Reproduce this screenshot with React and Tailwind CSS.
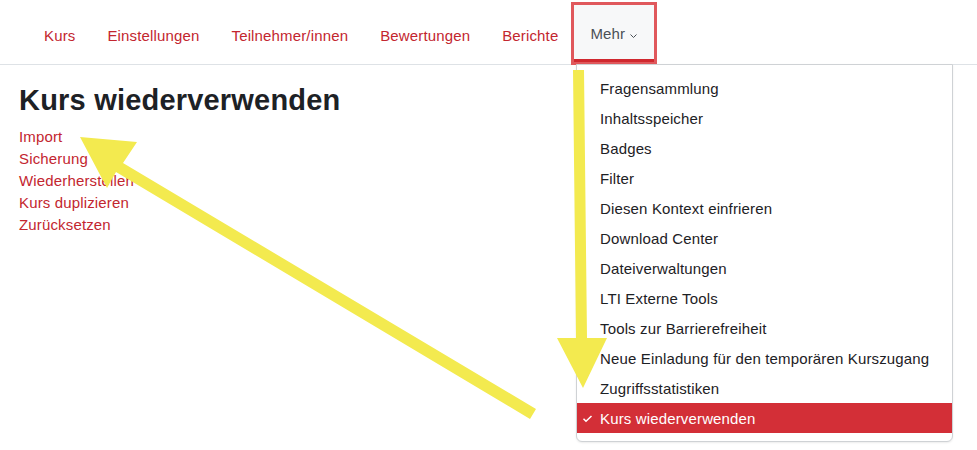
import React from "react";

const navItems = ["Kurs", "Einstellungen", "Teilnehmer/innen", "Bewertungen", "Berichte"];
const links = ["Import", "Sicherung", "Wiederherstellen", "Kurs duplizieren", "Zurücksetzen"];
const menu = [
  "Fragensammlung",
  "Inhaltsspeicher",
  "Badges",
  "Filter",
  "Diesen Kontext einfrieren",
  "Download Center",
  "Dateiverwaltungen",
  "LTI Externe Tools",
  "Tools zur Barrierefreiheit",
  "Neue Einladung für den temporären Kurszugang",
  "Zugriffsstatistiken",
];

export default function App() {
  return (
    <div
      className="relative w-[977px] h-[450px] bg-white overflow-hidden text-[15px] tracking-[0.15px]"
      style={{ fontFamily: '"Liberation Sans", Arial, sans-serif' }}
    >
      <nav className="h-[65px] border-b border-[#dee2e6] flex items-stretch pl-[28px]">
        {navItems.map((t) => (
          <div key={t} className="flex items-center px-4 pt-[8px] text-[#c3262f]">
            {t}
          </div>
        ))}
        <div className="mt-[5px] h-[57px] flex items-center px-4 pt-[5px] bg-[#f7f8f9] text-[#4a5056] border-b-[3px] border-[#d0282f] outline-[3px] outline-solid outline-[#e0585c]">
          Mehr
          <svg width="9" height="6" viewBox="0 0 9 6" className="ml-[4px] mt-[2px]">
            <path d="M1.5 1.5 L4.5 4.5 L7.5 1.5" fill="none" stroke="#4a5056" strokeWidth="1" />
          </svg>
        </div>
      </nav>

      <main className="pl-[19px] pt-[18px]">
        <h2 className="text-[29px] leading-[35px] font-bold text-[#1d2125] mb-2 tracking-[0.2px]">Kurs wiederverwenden</h2>
        <div className="flex flex-col">
          {links.map((l) => (
            <div key={l} className="leading-[22px] text-[#c3262f]">
              {l}
            </div>
          ))}
        </div>
      </main>

      <div className="absolute left-[576px] top-[64px] w-[377px] border border-[#cfd2d5] rounded-b-[6px] bg-white py-2 shadow-[0_1px_2px_rgba(0,0,0,0.08)]">
        {menu.map((m) => (
          <div key={m} className="h-[30px] flex items-center pt-[2px] pl-[23px] text-[#1d2125] whitespace-nowrap">
            {m}
          </div>
        ))}
        <div className="h-[30px] flex items-center pt-[2px] bg-[#d32f37] text-white">
          <svg width="23" height="28" viewBox="0 0 23 28" className="shrink-0">
            <path d="M6.5 13.8 L9 16.3 L14.5 11" fill="none" stroke="white" strokeWidth="1.5" />
          </svg>
          Kurs wiederverwenden
        </div>
      </div>

      <svg className="absolute inset-0 pointer-events-none" width="977" height="450" viewBox="0 0 977 450">
        <polygon
          points="573,70 584,70 587,338 607,338 583,388 557,338 576,338"
          fill="#f3ea4f"
        />
        <polygon
          points="80,137 137,142 123,163 536,409 530,419 116,172 107,188"
          fill="#f3ea4f"
        />
      </svg>
    </div>
  );
}
